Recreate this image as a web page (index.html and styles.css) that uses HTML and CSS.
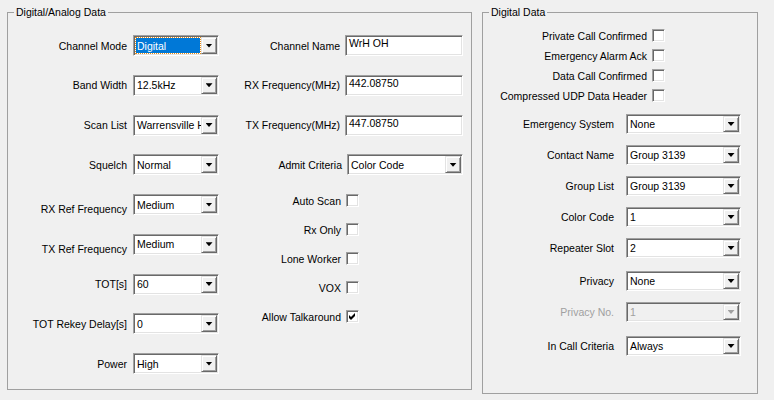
FILE: index.html
```html
<!DOCTYPE html>
<html>
<head>
    <title>Channel Settings</title>
    <link rel="stylesheet" href="styles.css">
</head>
<body>
    <div class="page">
        <fieldset class="group group-main">
            <legend>Digital/Analog Data</legend>
            <div class="main-cols">
                <div class="col col-a">
                    <div class="row">
                        <label>Channel Mode</label>
                        <div class="combo combo-sm"><span class="combo-text"><span class="sel">Digital</span></span><span class="combo-btn"></span></div>
                    </div>
                    <div class="row">
                        <label>Band Width</label>
                        <div class="combo combo-sm"><span class="combo-text">12.5kHz</span><span class="combo-btn"></span></div>
                    </div>
                    <div class="row">
                        <label>Scan List</label>
                        <div class="combo combo-sm"><span class="combo-text">Warrensville Hts</span><span class="combo-btn"></span></div>
                    </div>
                    <div class="row">
                        <label>Squelch</label>
                        <div class="combo combo-sm"><span class="combo-text">Normal</span><span class="combo-btn"></span></div>
                    </div>
                    <div class="row">
                        <label class="low">RX Ref Frequency</label>
                        <div class="combo combo-sm"><span class="combo-text">Medium</span><span class="combo-btn"></span></div>
                    </div>
                    <div class="row">
                        <label class="low">TX Ref Frequency</label>
                        <div class="combo combo-sm"><span class="combo-text">Medium</span><span class="combo-btn"></span></div>
                    </div>
                    <div class="row">
                        <label>TOT[s]</label>
                        <div class="combo combo-sm"><span class="combo-text">60</span><span class="combo-btn"></span></div>
                    </div>
                    <div class="row">
                        <label>TOT Rekey Delay[s]</label>
                        <div class="combo combo-sm"><span class="combo-text">0</span><span class="combo-btn"></span></div>
                    </div>
                    <div class="row">
                        <label>Power</label>
                        <div class="combo combo-sm"><span class="combo-text">High</span><span class="combo-btn"></span></div>
                    </div>
                </div>

                <div class="col col-b">
                    <div class="row">
                        <label>Channel Name</label>
                        <div class="edit">WrH OH</div>
                    </div>
                    <div class="row">
                        <label>RX Frequency(MHz)</label>
                        <div class="edit">442.08750</div>
                    </div>
                    <div class="row">
                        <label>TX Frequency(MHz)</label>
                        <div class="edit">447.08750</div>
                    </div>
                    <div class="row">
                        <label>Admit Criteria</label>
                        <div class="combo combo-wide"><span class="combo-text">Color Code</span><span class="combo-btn"></span></div>
                    </div>
                    <div class="checks">
                        <div class="check-row"><label>Auto Scan</label><span class="checkbox"></span></div>
                        <div class="check-row"><label>Rx Only</label><span class="checkbox"></span></div>
                        <div class="check-row"><label>Lone Worker</label><span class="checkbox"></span></div>
                        <div class="check-row"><label>VOX</label><span class="checkbox"></span></div>
                        <div class="check-row"><label>Allow Talkaround</label><span class="checkbox checked"><svg width="9" height="9" viewBox="0 0 9 9"><path d="M1 3 L3 5 L7 1 L7 4 L3 8 L1 6 Z" fill="#000"/></svg></span></div>
                    </div>
                </div>
            </div>
        </fieldset>

        <fieldset class="group group-digital">
            <legend>Digital Data</legend>
            <div class="digital-checks">
                <div class="check-row"><label>Private Call Confirmed</label><span class="checkbox"></span></div>
                <div class="check-row"><label>Emergency Alarm Ack</label><span class="checkbox"></span></div>
                <div class="check-row"><label>Data Call Confirmed</label><span class="checkbox"></span></div>
                <div class="check-row"><label>Compressed UDP Data Header</label><span class="checkbox"></span></div>
            </div>
            <div class="digital-fields">
                <div class="row row-sm">
                    <label>Emergency System</label>
                    <div class="combo combo-md"><span class="combo-text">None</span><span class="combo-btn"></span></div>
                </div>
                <div class="row row-sm">
                    <label>Contact Name</label>
                    <div class="combo combo-md"><span class="combo-text">Group 3139</span><span class="combo-btn"></span></div>
                </div>
                <div class="row row-sm">
                    <label>Group List</label>
                    <div class="combo combo-md"><span class="combo-text">Group 3139</span><span class="combo-btn"></span></div>
                </div>
                <div class="row row-sm">
                    <label>Color Code</label>
                    <div class="combo combo-md"><span class="combo-text">1</span><span class="combo-btn"></span></div>
                </div>
                <div class="row row-sm">
                    <label>Repeater Slot</label>
                    <div class="combo combo-md"><span class="combo-text">2</span><span class="combo-btn"></span></div>
                </div>
                <div class="row row-sm row-push">
                    <label>Privacy</label>
                    <div class="combo combo-md"><span class="combo-text">None</span><span class="combo-btn"></span></div>
                </div>
                <div class="row row-sm">
                    <label class="disabled">Privacy No.</label>
                    <div class="combo combo-md disabled"><span class="combo-text">1</span><span class="combo-btn"></span></div>
                </div>
                <div class="row row-sm row-last">
                    <label>In Call Criteria</label>
                    <div class="combo combo-md"><span class="combo-text">Always</span><span class="combo-btn"></span></div>
                </div>
            </div>
        </fieldset>
    </div>
</body>
</html>
```

FILE: styles.css
```css
body {
    margin: 0;
    background-color: #f0f0f0;
    font-family: "Liberation Sans", Arial, sans-serif;
    font-size: 10.5px;
    color: #000;
}

.page {
    display: flex;
    align-items: flex-start;
    gap: 10px;
    padding: 6px 0 0 7px;
}

.group {
    box-sizing: border-box;
    margin: 0;
    padding: 0;
    border: 1px solid #a0a0a0;
    min-width: 0;
}

.group legend {
    margin-left: 6px;
    padding: 0 2px;
    line-height: 13px;
}

.group-main {
    width: 465px;
    height: 384px;
    padding-top: 16px;
}

.group-digital {
    width: 276px;
    height: 388px;
    padding-top: 10px;
}

.main-cols {
    display: flex;
}

.col {
    display: flex;
    flex-direction: column;
    gap: 18.75px;
}

.col-a {
    width: 211px;
}

.col-b {
    width: 244px;
}

.row {
    display: flex;
    justify-content: flex-end;
    align-items: center;
    height: 21px;
}

.row label {
    margin-right: 6px;
    white-space: nowrap;
}

.row label.low {
    align-self: flex-end;
    line-height: 12px;
}

.col-b .row label {
    margin-right: 5px;
}

.row-sm {
    height: 20px;
}

.row-sm label {
    margin-right: 12px;
}

.row-push {
    margin-top: 2px;
}

.row-last {
    margin-top: 3px;
}

label.disabled {
    color: #a0a0a0;
}

/* sunken edit / combo boxes */
.edit,
.combo,
.checkbox {
    box-sizing: border-box;
    background-color: #fff;
    border: 1px solid;
    border-color: #a0a0a0 #fff #fff #a0a0a0;
    box-shadow: inset 1px 1px 0 #696969, inset -1px -1px 0 #e3e3e3;
}

.edit {
    width: 118px;
    height: 21px;
    padding: 1px 3px 0;
    line-height: 13px;
    white-space: nowrap;
}

.combo {
    display: flex;
    height: 21px;
    padding: 1px;
}

.combo-sm {
    width: 86px;
}

.combo-wide {
    width: 116px;
}

.combo-md {
    width: 115px;
    height: 20px;
}

.combo-text {
    flex: 1;
    display: flex;
    align-items: center;
    padding-left: 2px;
    overflow: hidden;
    white-space: nowrap;
}

.combo-text .sel {
    align-self: stretch;
    flex: 1;
    display: flex;
    align-items: center;
    margin: 1px 1px 1px -1px;
    padding-left: 1px;
    background-color: #0078d7;
    color: #fff;
    outline: 1px dotted #e98b12;
}

.combo-btn {
    box-sizing: border-box;
    width: 16px;
    display: flex;
    align-items: center;
    justify-content: center;
    background-color: #f0f0f0;
    border: 1px solid;
    border-color: #e3e3e3 #696969 #696969 #e3e3e3;
    box-shadow: inset 1px 1px 0 #fff, inset -1px -1px 0 #a0a0a0;
}

.combo-btn::after {
    content: "";
    width: 7px;
    height: 4px;
    background-color: #000;
    clip-path: polygon(0 0, 100% 0, 50% 100%);
}

.combo.disabled {
    background-color: #f0f0f0;
    color: #a0a0a0;
}

.combo.disabled .combo-btn::after {
    background-color: #a0a0a0;
}

/* check boxes */
.checks {
    display: flex;
    flex-direction: column;
    gap: 16px;
    margin-right: 104px;
}

.check-row {
    display: flex;
    justify-content: flex-end;
    align-items: center;
    height: 13px;
}

.check-row label {
    margin-right: 5px;
    white-space: nowrap;
}

.checkbox {
    width: 13px;
    height: 13px;
    display: flex;
    align-items: center;
    justify-content: center;
}

.digital-checks {
    display: flex;
    flex-direction: column;
    gap: 7px;
    margin-right: 92px;
}

.digital-fields {
    display: flex;
    flex-direction: column;
    gap: 11px;
    margin-top: 12px;
    margin-right: 16px;
}
```
